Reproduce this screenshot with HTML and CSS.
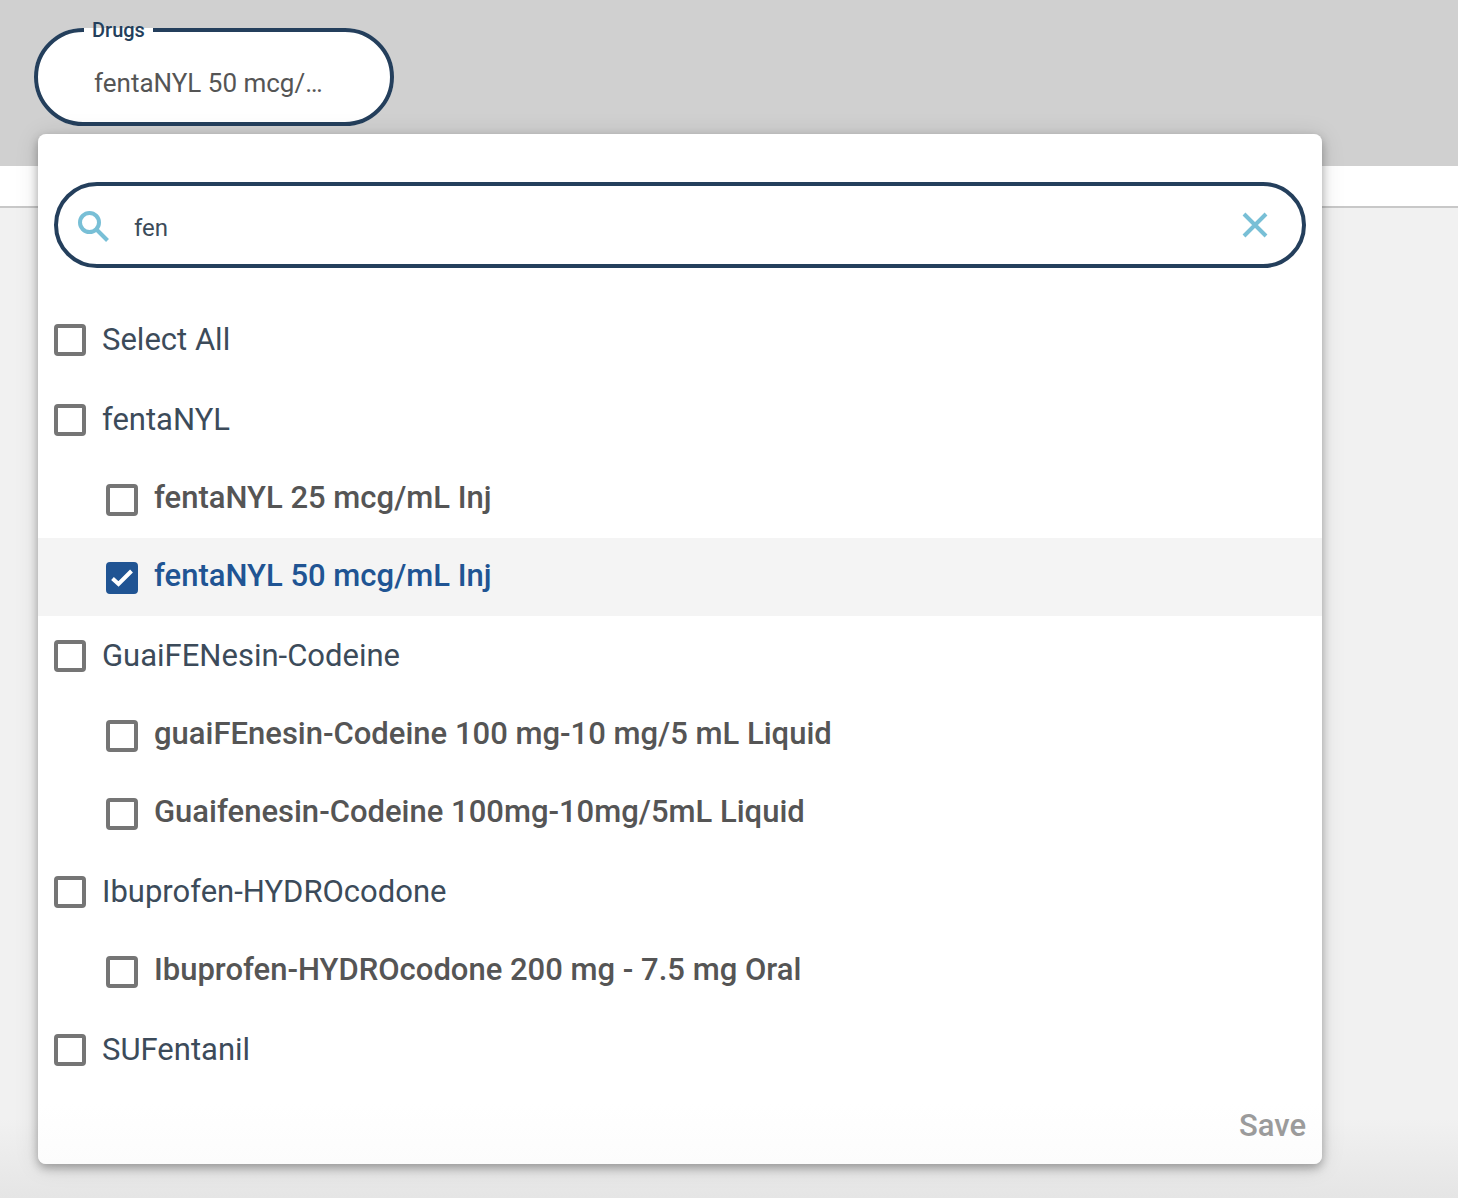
FILE: index.html
```
<!DOCTYPE html>
<html lang="en">
<head>
    <meta charset="UTF-8">
    <title>Drugs</title>
    <link rel="stylesheet" href="styles.css">
</head>
<body>
<div class="toolbar">
    <div class="filter">
        <fieldset class="field">
            <legend>Drugs</legend>
            <button type="button" class="field-value" aria-expanded="true">fentaNYL 50 mcg/mL Inj</button>
        </fieldset>
        <form class="panel">
            <div class="search">
                <svg class="search-icon" viewBox="0 0 32 36" aria-hidden="true">
                    <circle cx="11.500" cy="15.500" r="9.500"/>
                    <path d="M18.500 22.500L29.500 33.500"/>
                </svg>
                <input type="text" class="search-input" aria-label="Search drugs" value="fen">
                <button type="button" class="clear" aria-label="Clear">
                    <svg viewBox="0 0 26 26" aria-hidden="true"><path d="M2 2L24 24M24 2L2 24"/></svg>
                </button>
            </div>
            <ul class="options">
                <li><label class="group"><input type="checkbox"><span>Select All</span></label></li>
                <li><label class="group"><input type="checkbox"><span>fentaNYL</span></label></li>
                <li><label class="item"><input type="checkbox"><span>fentaNYL 25 mcg/mL Inj</span></label></li>
                <li><label class="item selected"><input type="checkbox" checked><span>fentaNYL 50 mcg/mL Inj</span></label></li>
                <li><label class="group"><input type="checkbox"><span>GuaiFENesin-Codeine</span></label></li>
                <li><label class="item"><input type="checkbox"><span>guaiFEnesin-Codeine 100 mg-10 mg/5 mL Liquid</span></label></li>
                <li><label class="item"><input type="checkbox"><span>Guaifenesin-Codeine 100mg-10mg/5mL Liquid</span></label></li>
                <li><label class="group"><input type="checkbox"><span>Ibuprofen-HYDROcodone</span></label></li>
                <li><label class="item"><input type="checkbox"><span>Ibuprofen-HYDROcodone 200 mg - 7.5 mg Oral</span></label></li>
                <li><label class="group"><input type="checkbox"><span>SUFentanil</span></label></li>
            </ul>
            <div class="actions">
                <button type="submit" class="save" disabled>Save</button>
            </div>
        </form>
    </div>
</div>
<div class="strip"></div>
</body>
</html>
```
FILE: styles.css
```
*{
    margin: 0;
    padding: 0;
    box-sizing: border-box;
}
html{
    height: 100%;
}
body{
    min-height: 100%;
    font-family: Roboto, "Liberation Sans", sans-serif;
    background: linear-gradient(to top, #e5e5e5, #f1f1f1 80px);
}
li{
    list-style: none;
}
button,
input{
    font: inherit;
    color: inherit;
    border: 0;
    background: none;
}
.toolbar{
    height: 166px;
    padding: 18px 34px 0;
    background: #d0d0d0;
}
.strip{
    height: 42px;
    background: #fff;
    border-bottom: 2px solid #c8c8c8;
}
.filter{
    position: relative;
}
.field{
    width: 360px;
    min-width: 0;
    height: 108px;
    padding: 0 46px;
    border: 4px solid #243f5c;
    border-radius: 49px;
    background: #fff;
}
.field legend{
    padding: 0 8px;
    font-size: 20px;
    font-weight: 500;
    line-height: 24px;
    color: #243f5c;
}
.field-value{
    display: block;
    width: 100%;
    padding: 0 10px;
    overflow: hidden;
    text-overflow: ellipsis;
    white-space: nowrap;
    text-align: left;
    font-size: 26px;
    line-height: 82px;
    color: #555;
}
/* dropdown */
.panel{
    position: absolute;
    top: 116px;
    left: 4px;
    right: 102px;
    padding: 48px 0 16px;
    border-radius: 8px;
    background: linear-gradient(to top, #fcfcfc, #fff 60px);
    box-shadow: 0 4px 10px rgba(0, 0, 0, .3), 0 2px 24px rgba(0, 0, 0, .12);
}
.search{
    display: flex;
    align-items: center;
    height: 86px;
    margin: 0 16px 32px;
    padding: 0 34px 0 20px;
    border: 4px solid #243f5c;
    border-radius: 43px;
}
.search svg{
    display: block;
    fill: none;
    stroke: #78bfd6;
    stroke-width: 4;
}
.search-icon{
    width: 32px;
    height: 36px;
}
.search-input{
    flex: 1;
    min-width: 0;
    padding: 6px 24px 0;
    font-size: 24px;
    line-height: 32px;
    color: #3c4b5a;
    outline: 0;
}
.clear svg{
    width: 26px;
    height: 26px;
}
.group,
.item{
    display: flex;
    align-items: center;
    gap: 16px;
    height: 80px;
    padding: 0 16px;
    font-size: 31px;
    line-height: 40px;
    color: #3c4b5a;
}
.item{
    height: 78px;
    padding: 2px 16px 0 68px;
    font-weight: 500;
    color: #555;
}
.item span{
    padding-bottom: 4px;
}
.selected{
    background: #f4f4f4;
    color: #205493;
}
.options input{
    appearance: none;
    flex: none;
    width: 32px;
    height: 32px;
    border: 4px solid #757575;
    border-radius: 4px;
}
.options input:checked{
    border-color: #205493;
    background: #205493 url("data:image/svg+xml,%3Csvg xmlns='http://www.w3.org/2000/svg' viewBox='0 0 24 24'%3E%3Cpath d='M2.500 12.500L8.500 18L21.500 5' fill='none' stroke='%23fff' stroke-width='4'/%3E%3C/svg%3E") center/24px no-repeat;
}
.actions{
    padding: 14px 16px 0;
    text-align: right;
}
.save{
    font-size: 31px;
    font-weight: 500;
    line-height: 44px;
    color: #9b9b9b;
}
```
